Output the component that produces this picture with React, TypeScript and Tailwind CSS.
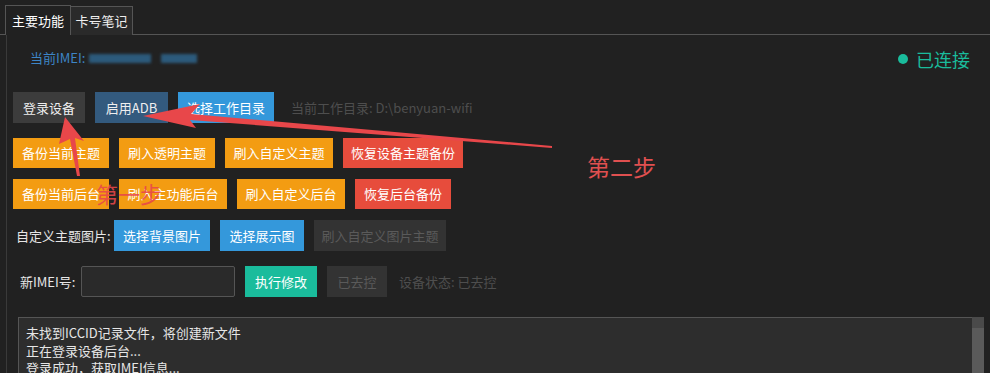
import React from "react";

const font = { fontFamily: '"Microsoft YaHei", "Noto Sans CJK SC", "Noto Sans", sans-serif' };

function Btn({ w, bg, fg = "text-white", children }: { w: string; bg: string; fg?: string; children: React.ReactNode }) {
  return (
    <div className={`${w} ${bg} ${fg} h-[30px] flex items-center justify-center text-[13px] shrink-0`}>{children}</div>
  );
}

export default function App() {
  return (
    <div className="relative w-[990px] h-[373px] overflow-hidden bg-[#212121] text-white" style={font}>
      {/* tabs */}
      <div className="flex pl-[5px] pt-[5px] h-[35px] border-b border-[#555]">
        <div className="w-[66px] h-[30px] border border-b-0 border-[#555] bg-[#212121] flex items-center justify-center text-[13px] text-white -mb-px relative z-10">主要功能</div>
        <div className="w-[62px] h-[29px] mt-px border border-b-0 border-l-0 border-[#555] bg-[#2a2a2a] flex items-center justify-center text-[13px] text-[#eee]">卡号笔记</div>
      </div>
      <div className="ml-[6px] border-l border-[#3a3a3a] pl-[6px] pr-[6px] flex flex-col">
        {/* IMEI row */}
        <div className="flex items-center h-[46px] shrink-0">
          <div className="ml-[17px] text-[13px] text-[#3d85c6]">当前IMEI:</div>
          <div className="ml-[4px] w-[62px] h-[9px] bg-[#2c5a7c] blur-[1.5px]" />
          <div className="ml-[10px] w-[36px] h-[9px] bg-[#2c5a7c] blur-[1.5px]" />
          <div className="flex-1" />
          <div className="flex items-center gap-[8px] mr-[14px] mt-[2px] text-[#1abc9c] text-[18px]">
            <span className="w-[10px] h-[10px] rounded-full bg-[#1abc9c]" />
            <span>已连接</span>
          </div>
        </div>
        {/* row 1 */}
        <div className="flex items-center gap-[10px] mt-[11px] shrink-0">
          <div className="w-[72px] h-[31px] bg-[#3c3c3c] text-[#eee] flex items-center justify-center text-[13px]">登录设备</div>
          <div className="w-[73px] h-[31px] bg-[#335a7e] text-[#eee] flex items-center justify-center text-[13px]">启用ADB</div>
          <div className="w-[96px] h-[31px] bg-[#3498db] text-white flex items-center justify-center text-[13px]">选择工作目录</div>
          <div className="ml-[7px] text-[13px] text-[#4e4e4e]">当前工作目录: D:\benyuan-wifi</div>
        </div>
        {/* row 2 */}
        <div className="flex items-center gap-[10px] mt-[15px] shrink-0">
          <Btn w="w-[96px]" bg="bg-[#f39c12]">备份当前主题</Btn>
          <Btn w="w-[96px]" bg="bg-[#f39c12]">刷入透明主题</Btn>
          <Btn w="w-[108px]" bg="bg-[#f39c12]">刷入自定义主题</Btn>
          <Btn w="w-[120px]" bg="bg-[#e74c3c]">恢复设备主题备份</Btn>
        </div>
        {/* row 3 */}
        <div className="flex items-center gap-[10px] mt-[11px] shrink-0">
          <Btn w="w-[96px]" bg="bg-[#f39c12]">备份当前后台</Btn>
          <Btn w="w-[108px]" bg="bg-[#f39c12]">刷入主功能后台</Btn>
          <Btn w="w-[108px]" bg="bg-[#f39c12]">刷入自定义后台</Btn>
          <Btn w="w-[96px]" bg="bg-[#e74c3c]">恢复后台备份</Btn>
        </div>
        {/* row 4 */}
        <div className="flex items-center mt-[11px] h-[31px] shrink-0">
          <div className="ml-[3px] w-[98px] text-[13px] text-[#e6e6e6]">自定义主题图片:</div>
          <div className="flex gap-[10px]">
            <div className="w-[96px] h-[31px] bg-[#3498db] flex items-center justify-center text-[13px]">选择背景图片</div>
            <div className="w-[84px] h-[31px] bg-[#3498db] flex items-center justify-center text-[13px]">选择展示图</div>
            <div className="w-[132px] h-[31px] bg-[#333333] text-[#5a5a5a] flex items-center justify-center text-[13px]">刷入自定义图片主题</div>
          </div>
        </div>
        {/* row 5 */}
        <div className="flex items-center mt-[15px] h-[31px] shrink-0">
          <div className="ml-[7px] w-[61px] text-[13px] text-[#e6e6e6]">新IMEI号:</div>
          <div className="w-[154px] h-[31px] border border-[#555] bg-[#2a2a2a] rounded-[2px]" />
          <div className="ml-[10px] w-[72px] h-[31px] bg-[#1abc9c] flex items-center justify-center text-[13px]">执行修改</div>
          <div className="ml-[10px] w-[60px] h-[31px] bg-[#333333] text-[#5a5a5a] flex items-center justify-center text-[13px]">已去控</div>
          <div className="ml-[12px] text-[13px] text-[#4e4e4e]">设备状态: 已去控</div>
        </div>
        {/* log */}
        <div className="flex mt-[20px] ml-[5px] h-[70px] shrink-0">
          <div className="w-[954px] border-t border-l border-[#555] bg-[#2d2d2d] pl-[7px] pt-[6px] text-[13px] leading-[17.5px] text-[#e6e6e6]">
            <div>未找到ICCID记录文件，将创建新文件</div>
            <div>正在登录设备后台...</div>
            <div>登录成功，获取IMEI信息...</div>
          </div>
          <div className="w-[12px] bg-[#5a5a5a] flex flex-col">
            <div className="h-[11px] bg-[#4a4a4a]" />
          </div>
        </div>
      </div>

      {/* annotations */}
      <svg className="absolute inset-0 pointer-events-none" width="990" height="373">
        <polygon points="65,117 84,141 75,138 80,176 77,176 70,139 59,144" fill="#e8474a" />
        <polygon points="143,116 200,104 191,114 552,146 552,148 190,120 196,128" fill="#e8474a" />
      </svg>
      <div className="absolute left-[96px] top-[178px] text-[22px] leading-[30px] text-[#e8474a]/90">第一步</div>
      <div className="absolute left-[587px] top-[150px] text-[23px] leading-[32px] text-[#e05050]">第二步</div>
    </div>
  );
}
